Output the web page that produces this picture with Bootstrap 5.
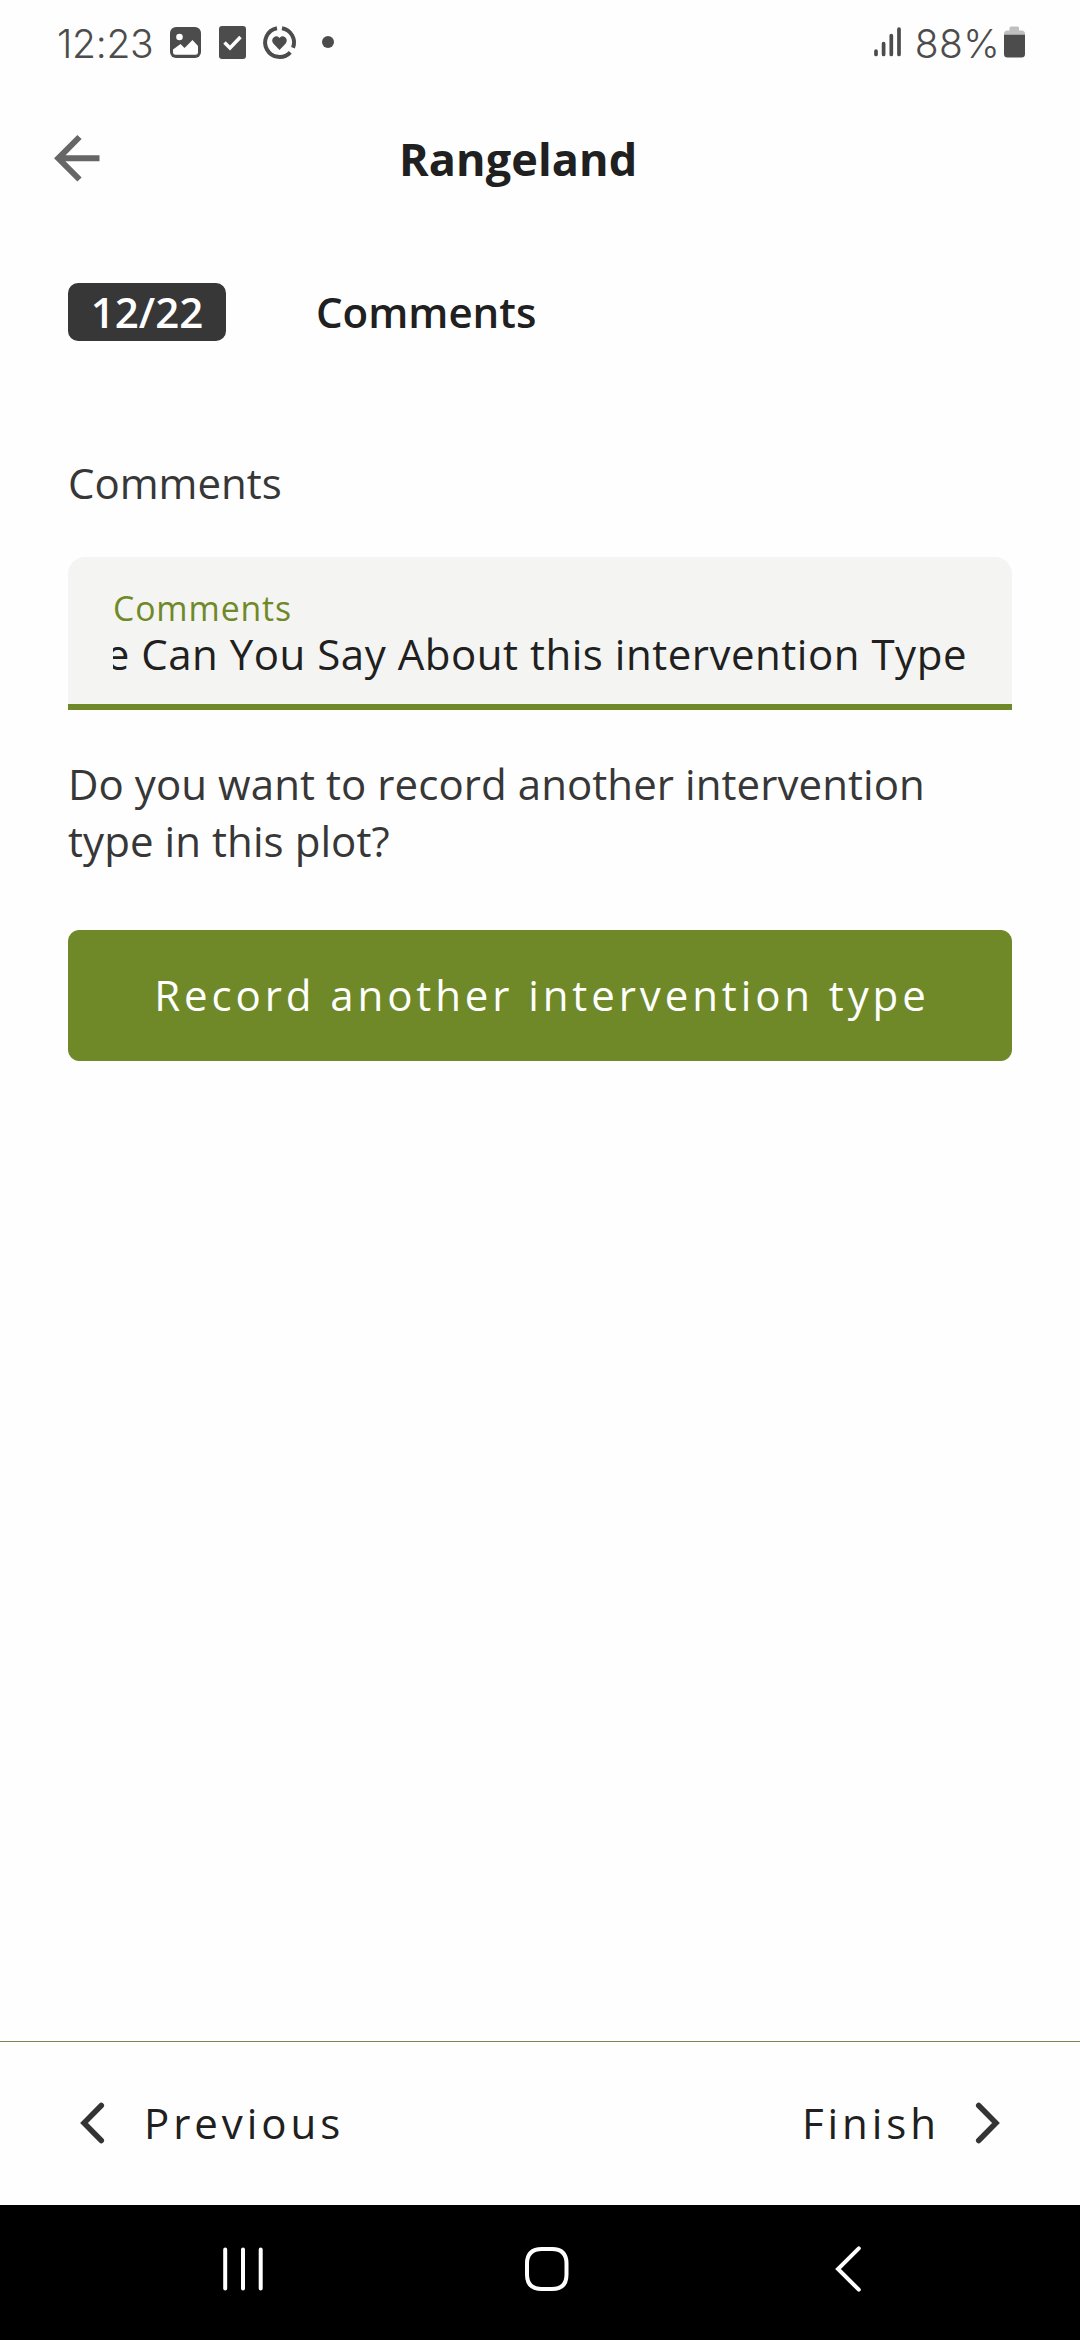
<!DOCTYPE html>
<html lang="en">
<head>
<meta charset="utf-8">
<meta name="viewport" content="width=device-width, initial-scale=1">
<title>Rangeland</title>
<link rel="stylesheet" href="https://cdn.jsdelivr.net/npm/bootstrap@5.3.0/dist/css/bootstrap.min.css">
<style>
  :root { --olive: #6f8928; --ink: #202020; --soft-ink: #373737; --status: #4c4c4c; }
  body { font-family: "Open Sans", sans-serif; font-size: 42px; line-height: 57px; color: var(--ink); background: #fefefe; overflow: hidden; }
  svg { display: block; flex: none; }
  .screen { width: 1080px; height: 2340px; }
  .status-bar { height: 86px; padding: 0 54px 0 57px; color: var(--status); font-family: Inter, sans-serif; font-size: 39px; font-weight: 300; line-height: 86px; }
  .status-bar span { padding-top: 1px; }
  .clock { width: 112px; letter-spacing: -.3px; }
  .charge { letter-spacing: .3px; }
  .app-bar { height: 61px; margin-top: 41px; padding-left: 54px; }
  .app-title { margin: 0 0 0 299px; padding-top: 2px; font-size: 45px; line-height: 61px; font-weight: 700; letter-spacing: .1px; }
  .form-area { padding: 95px 68px 0; }
  .step-row { gap: 90px; }
  .step-badge { width: 158px; height: 58px; border-radius: 10px; background: var(--soft-ink); color: #fff; font-size: 42px; line-height: 58px; font-weight: 600; padding: 0; }
  .step-name { font-size: 42px; line-height: 58px; font-weight: 600; margin: 0; }
  .field-label { margin-top: 113px; color: var(--soft-ink); }
  .field-box { height: 153px; margin-top: 46px; padding: 31px 45px 0; background: #f4f4f2; border-bottom: 6px solid var(--olive); border-radius: 17px 17px 0 0; }
  .field-hint { font-size: 33.75px; line-height: 40px; letter-spacing: .9px; color: var(--olive); }
  .field-value { line-height: 51px; padding-bottom: 10px; letter-spacing: .52px; white-space: nowrap; }
  .question { margin: 45px 0 61px; color: var(--soft-ink); letter-spacing: .07px; }
  .btn-olive { --bs-btn-color: #fff; --bs-btn-bg: var(--olive); --bs-btn-border-color: var(--olive); height: 131px; border-radius: 11px; font-size: 42px; line-height: 57px; letter-spacing: 3.9px; padding: 0 0 2px 4px; }
  .pager { height: 164px; border-top: 1px solid #7f8450; padding: 0 80px 1px; }
  .pager .btn { --bs-btn-color: var(--ink); font-size: 42px; line-height: 57px; letter-spacing: 3.95px; padding: 0; border: 0; }
  .pager .btn span { padding-bottom: 2px; }
  .nav-keys { height: 135px; padding: 0 218px 7px 222px; }
  .home-key { margin-right: 5px; }
</style>
</head>
<body>
<div class="screen d-flex flex-column">
  <header class="status-bar d-flex align-items-center justify-content-between">
    <div class="d-flex align-items-center">
      <span class="clock">12:23</span>
      <svg width="172" height="40" viewBox="169 24 172 40" fill="#4c4c4c" aria-hidden="true">
        <rect x="170" y="28" width="31" height="31" rx="6"/>
        <circle cx="179.500" cy="38" r="3.300" fill="#fefefe"/>
        <path d="M173 50.500 L180.500 45 L184.500 49 L192.500 41 L198 47 V53.500 Q198 55.700 195.500 55.700 H175.500 Q173 55.700 173 53.500 Z" fill="#fefefe"/>
        <rect x="219" y="27" width="27" height="33" rx="3"/>
        <path d="M224.500 43.500 L230 49 L240.500 38" fill="none" stroke="#fefefe" stroke-width="3.500"/>
        <g fill="none" stroke="#4c4c4c" stroke-width="4">
          <path d="M277 29.200 A14.500 14.500 0 1 0 290.300 53.300"/>
          <path d="M282 29.200 A14.500 14.500 0 0 1 293 48.800"/>
        </g>
        <path d="M279.500 51 L273.500 44.700 C269.500 40 276 34.500 279.500 39 C283 34.500 289.500 40 285.500 44.700 Z"/>
        <circle cx="328" cy="43" r="6"/>
      </svg>
    </div>
    <div class="d-flex align-items-center">
      <svg width="43" height="40" viewBox="869 24 43 40" fill="none" stroke="#4c4c4c" stroke-width="3.700" stroke-linecap="round" aria-hidden="true">
        <path d="M873 52V55.500M880.600 44.500V55.500M888.300 36.500V55.500M896 30V55.500"/>
      </svg>
      <span class="charge">88%</span>
      <svg class="ms-1" width="22" height="40" viewBox="1003 24 22 40" aria-hidden="true">
        <path d="M1003 36V35Q1003 31.500 1006.500 31.500H1008.500V29Q1008.500 27.500 1010 27.500H1016.500Q1018 27.500 1018 29V31.500H1020.500Q1024 31.500 1024 35V36Z" fill="#bfbfbf"/>
        <path d="M1003 35.700H1024V55Q1024 58.500 1020.500 58.500H1006.500Q1003 58.500 1003 55Z" fill="#4c4c4c"/>
      </svg>
    </div>
  </header>

  <div class="app-bar d-flex align-items-center">
    <svg width="46" height="48" viewBox="54 134 46 48" fill="none" stroke="#666" stroke-width="6" aria-label="Back">
      <path d="M79.500 137L58.300 158.300L79.500 179.500M59 158.300H99.500"/>
    </svg>
    <h1 class="app-title">Rangeland</h1>
  </div>

  <main class="form-area flex-grow-1">
    <div class="step-row d-flex align-items-center">
      <span class="badge step-badge">12/22</span>
      <h2 class="step-name">Comments</h2>
    </div>
    <div class="field-label">Comments</div>
    <div class="field-box">
      <div class="field-hint">Comments</div>
      <div class="field-value d-flex justify-content-end overflow-hidden"><span>e Can You Say About this intervention Type</span></div>
    </div>
    <p class="question">Do you want to record another intervention type in this plot?</p>
    <button type="button" class="btn btn-olive w-100">Record another intervention type</button>
  </main>

  <footer class="pager d-flex align-items-center justify-content-between">
    <button type="button" class="btn d-flex align-items-center">
      <svg width="64" height="44" viewBox="80 2101 64 44" fill="none" stroke="#343434" stroke-width="5.500" stroke-linecap="round" aria-hidden="true"><path d="M101.300 2105.500L84 2123L101.300 2140.500"/></svg>
      <span>Previous</span>
    </button>
    <button type="button" class="btn d-flex align-items-center">
      <span>Finish</span>
      <svg width="60" height="44" viewBox="940 2101 60 44" fill="none" stroke="#343434" stroke-width="5.500" stroke-linecap="round" aria-hidden="true"><path d="M978.700 2105.500L996 2123L978.700 2140.500"/></svg>
    </button>
  </footer>

  <nav class="nav-keys bg-black d-flex align-items-center justify-content-between">
    <svg width="42" height="46" viewBox="222 2246 42 46" fill="none" stroke="#fff" stroke-width="4" stroke-linecap="round" aria-label="Recents"><path d="M225.200 2249.500V2288.500M243 2249.500V2288.500M260.700 2249.500V2288.500"/></svg>
    <svg class="home-key" width="46" height="46" viewBox="522 2246 46 46" fill="none" stroke="#fff" stroke-width="4" aria-label="Home"><path d="M540 2249H550Q564.500 2249 564.500 2263.500V2274.500Q564.500 2289 550 2289H540Q525 2289 525 2274.500V2263.500Q525 2249 540 2249Z"/></svg>
    <svg width="28" height="48" viewBox="834 2245 28 48" fill="none" stroke="#fff" stroke-width="4" stroke-linecap="round" aria-label="Back"><path d="M858.800 2248.300L838 2269L858.800 2289.700"/></svg>
  </nav>
</div>
<script src="https://cdn.jsdelivr.net/npm/bootstrap@5.3.0/dist/js/bootstrap.bundle.min.js"></script>
</body>
</html>
